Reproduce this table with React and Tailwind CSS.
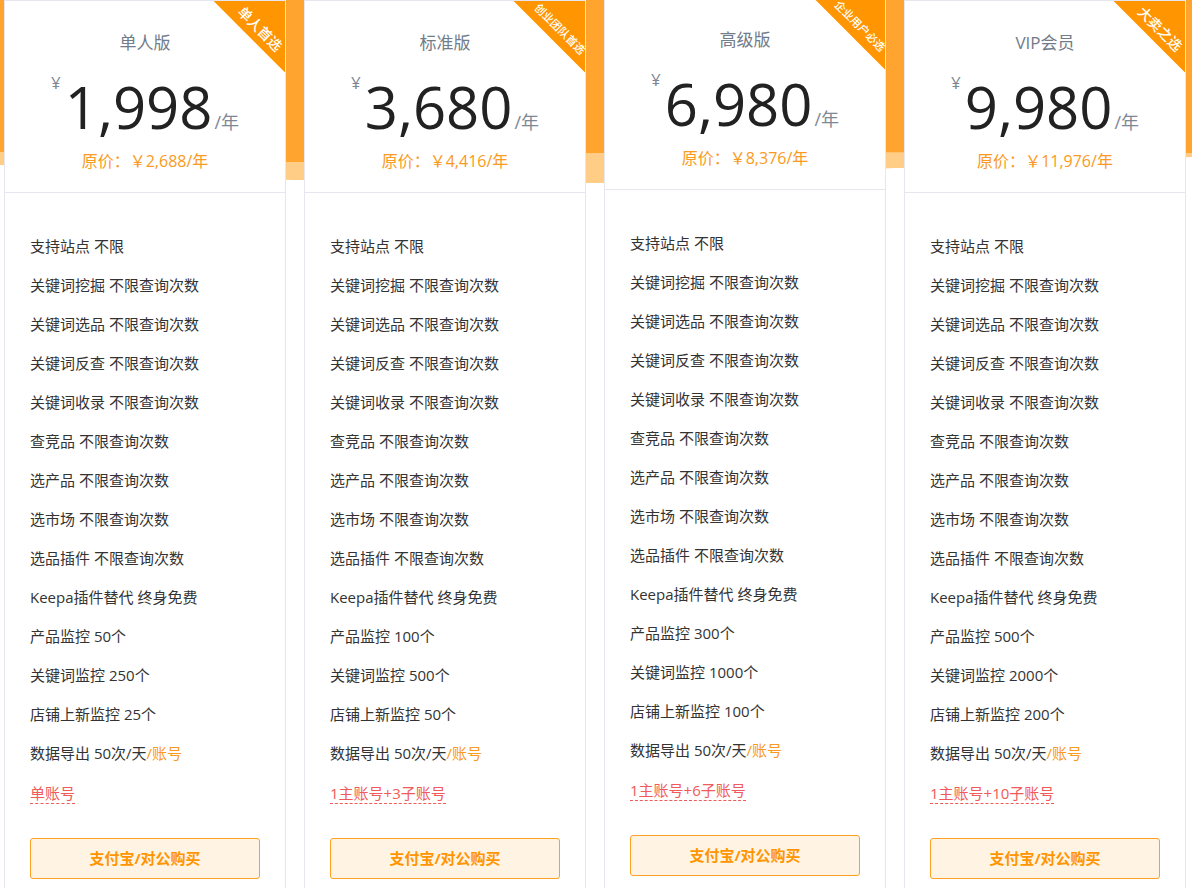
import React from "react";

const common = [
  ["支持站点", "不限"],
  ["关键词挖掘", "不限查询次数"],
  ["关键词选品", "不限查询次数"],
  ["关键词反查", "不限查询次数"],
  ["关键词收录", "不限查询次数"],
  ["查竞品", "不限查询次数"],
  ["选产品", "不限查询次数"],
  ["选市场", "不限查询次数"],
  ["选品插件", "不限查询次数"],
  ["Keepa插件替代", "终身免费"],
];

const plans = [
  { name: "单人版", price: "1,998", old: "2,688", tag: "单人首选", small: false, monitor: ["50个", "250个", "25个"], account: "单账号" },
  { name: "标准版", price: "3,680", old: "4,416", tag: "创业团队首选", small: true, monitor: ["100个", "500个", "50个"], account: "1主账号+3子账号" },
  { name: "高级版", price: "6,980", old: "8,376", tag: "企业用户必选", small: true, monitor: ["300个", "1000个", "100个"], account: "1主账号+6子账号", lifted: true },
  { name: "VIP会员", price: "9,980", old: "11,976", tag: "大卖之选", small: false, monitor: ["500个", "2000个", "200个"], account: "1主账号+10子账号" },
];

function Ribbon({ text, small }) {
  return (
    <div className="absolute left-[187px] top-[-14px] w-[160px] h-[60px] rotate-45 bg-[#ff9500] flex items-end justify-center">
      <span className={`leading-[27px] text-white font-medium ${small ? "text-[11px]" : "text-[14px]"}`}>{text}</span>
    </div>
  );
}

function Card({ plan }) {
  const rows = [
    ...common,
    ["产品监控", plan.monitor[0]],
    ["关键词监控", plan.monitor[1]],
    ["店铺上新监控", plan.monitor[2]],
  ];
  return (
    <div className={`relative w-[282px] shrink-0 bg-white border border-[#e6e6f0] overflow-hidden ${plan.lifted ? "-translate-y-[3px]" : ""}`}>
      <Ribbon text={plan.tag} small={plan.small} />

      {/* header */}
      <div className="border-b border-[#e6e6f0] pt-[31px] pb-[20px] text-center">
        <div className="text-[17px] leading-[22px] text-[#717c8a]">{plan.name}</div>
        <div className="flex justify-center items-baseline mt-[14px] h-[82px]">
          <span className="self-start text-[17px] leading-none text-[#7d8795] mt-[6px] mr-[4px]">¥</span>
          <span className="text-[58px] leading-[78px] text-[#222]">{plan.price}</span>
          <span className="text-[18px] text-[#7d8795] ml-[2px]">/年</span>
        </div>
        <div className="text-[16px] leading-[22px] text-[#fa9a22]">原价：￥{plan.old}/年</div>
      </div>

      {/* features */}
      <div className="px-[25px] pt-[34px] pb-[30px]">
        {rows.map(([k, v]) => (
          <div key={k} className="h-[39px] leading-[39px] text-[15px] text-[#333]">
            {k} {v}
          </div>
        ))}
        <div className="h-[39px] leading-[39px] text-[15px] text-[#333]">
          数据导出 50次/天<span className="text-[#fa9a22]">/账号</span>
        </div>
        <div className="h-[39px] flex items-center">
          <span className="text-[15px] leading-[19px] text-[#f05a5a] border-b border-dashed border-[#f05a5a] mt-[2px]">{plan.account}</span>
        </div>
        <button className="mt-[26px] w-[230px] h-[41px] rounded-[3px] border border-[#ffa022] bg-[#fff4e4] text-[#ff9500] text-[15px] font-bold">
          支付宝/对公购买
        </button>
      </div>
    </div>
  );
}

export default function App() {
  return (
    <div className="relative min-h-screen bg-white overflow-hidden" style={{ fontFamily: '"Open Sans", "Noto Sans CJK SC", sans-serif' }}>
      {/* orange wave backdrop */}
      <svg className="absolute left-0 top-0 w-[1192px] h-[200px]" viewBox="0 0 1192 200" preserveAspectRatio="none">
        <path d="M0 0 H1192 V157 C1050 162 950 168 895 168 C800 172 700 183 595 183 C450 183 350 180 295 180 C200 178 80 168 0 165 Z" fill="#ffcd86" />
        <path d="M0 0 H1192 V153 C1000 152 800 152 595 153 C450 154 350 162 295 162 C200 162 80 152 0 152 Z" fill="#ffa42e" />
      </svg>

      <div className="relative flex gap-[18px] pl-[4px]">
        {plans.map((p) => (
          <Card key={p.name} plan={p} />
        ))}
      </div>
    </div>
  );
}
